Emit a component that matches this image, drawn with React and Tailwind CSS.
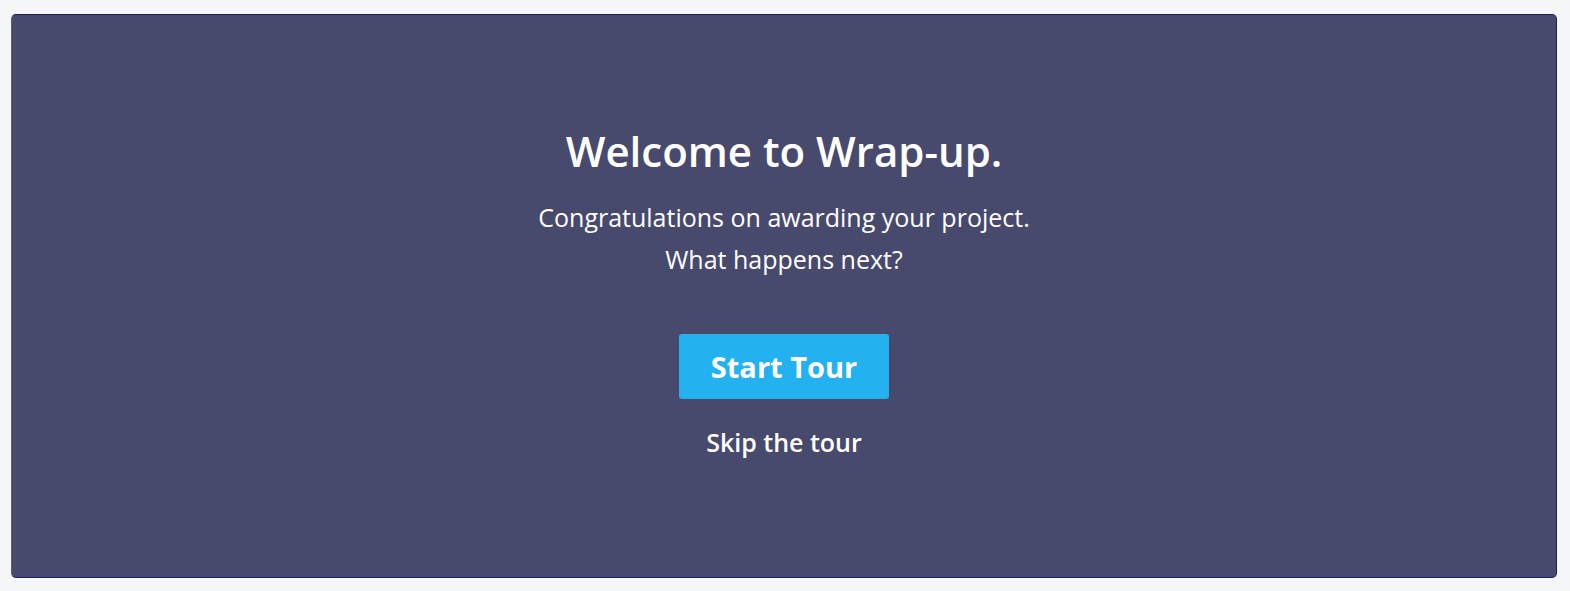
export default function App() {
  return (
    <div className="min-h-screen bg-[#f5f6f8] pt-[14px] pl-[11px] pr-[13px]" style={{ fontFamily: "'Open Sans', Lato, sans-serif" }}>
      <div className="h-[564px] rounded-[5px] border border-[#1c1f5a] border-l-[#5a5d80] bg-[#474a6d] flex flex-col items-center pt-[108px] text-white">
        <h1 className="text-[42px] leading-[56px] font-semibold">Welcome to Wrap-up.</h1>
        <p className="mt-[17px] text-[25px] leading-[42px] text-center">
          Congratulations on awarding your project.
          <br />
          What happens next?
        </p>
        <button className="mt-[54px] w-[210px] h-[65px] rounded-[3px] bg-[#24b1f0] text-[29px] font-bold">
          Start Tour
        </button>
        <a href="#" className="mt-[25px] text-[25px] font-semibold">Skip the tour</a>
      </div>
    </div>
  )
}
